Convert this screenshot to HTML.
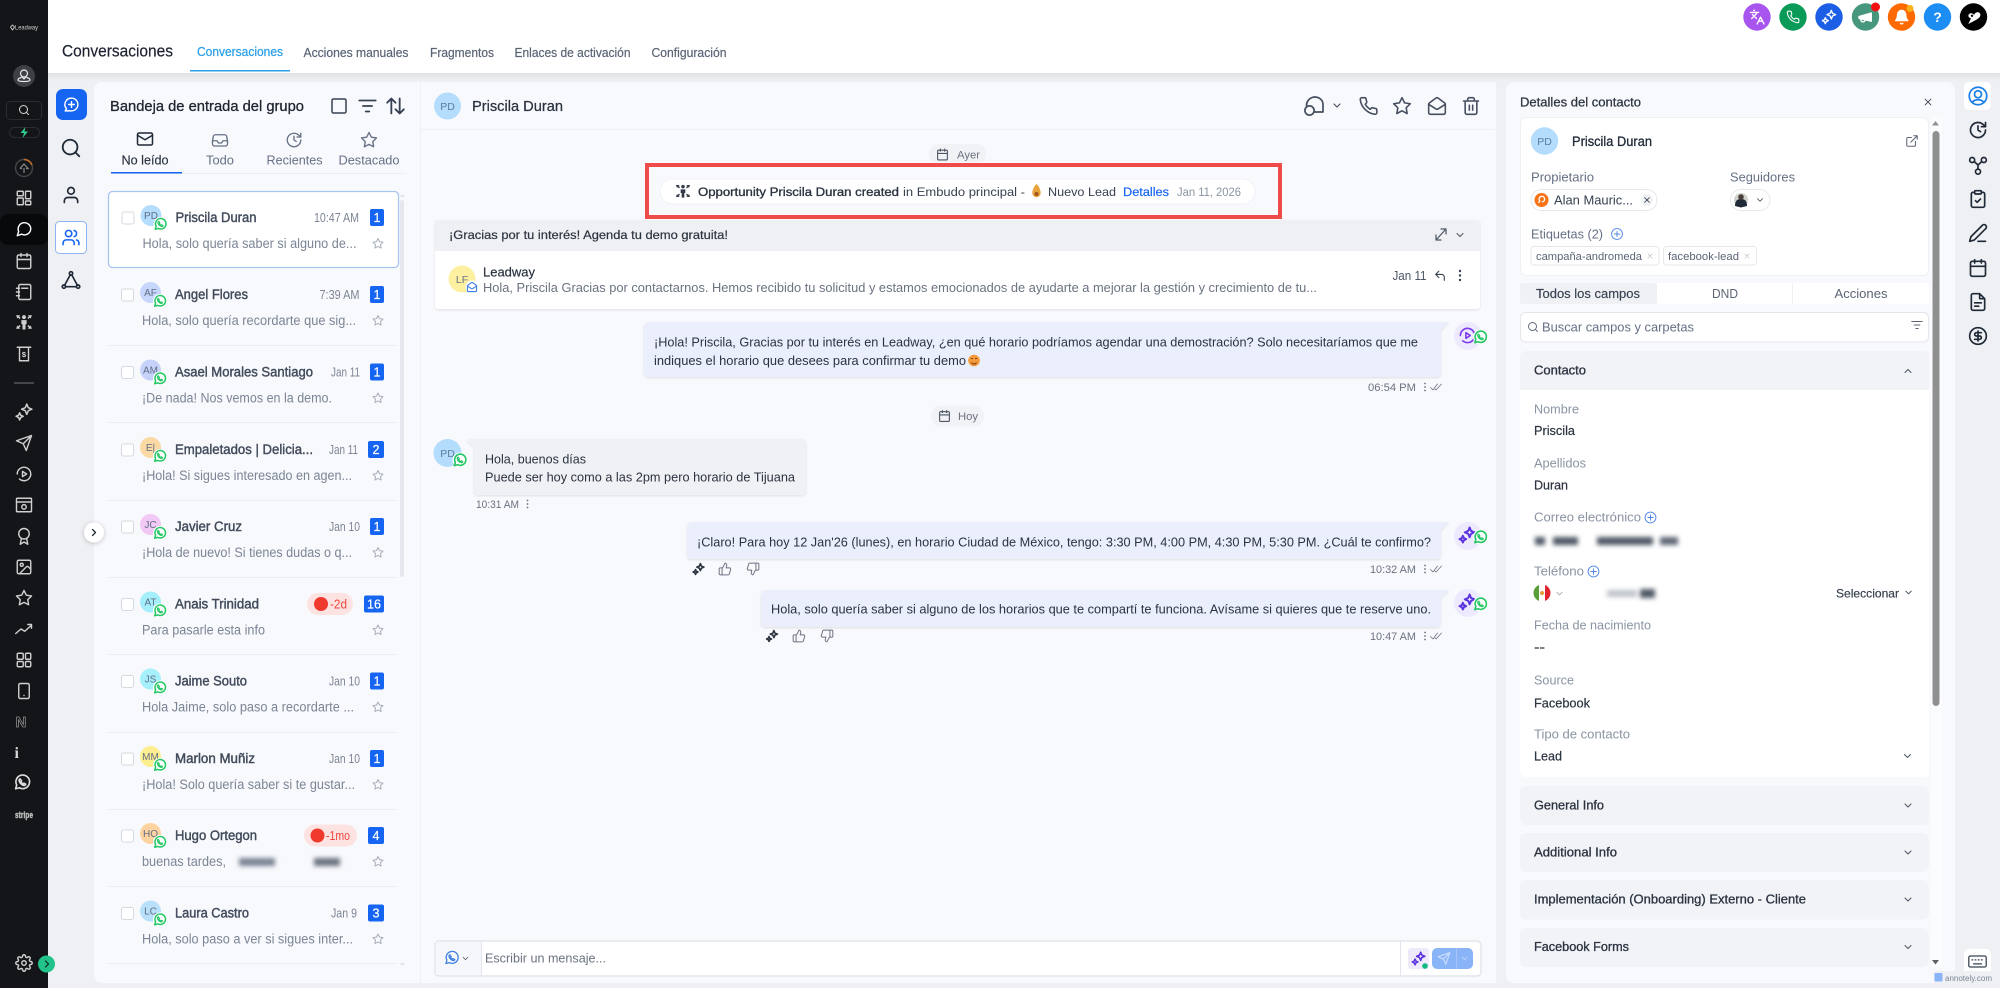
<!DOCTYPE html>
<html lang="es"><head><meta charset="utf-8"><title>Conversaciones</title>
<style>
html,body{margin:0;padding:0;width:2000px;height:988px;overflow:hidden;background:#eef0f3}
svg{display:block}
text{font-family:"Liberation Sans","Noto Sans CJK SC",sans-serif;white-space:pre}
.tb{font-size:12.5px;fill:#5b6575;stroke:#5b6575;stroke-width:.2}
.nm{font-size:13.5px;fill:#414b5b;stroke:#414b5b;stroke-width:.42}
.tm{font-size:12.5px;fill:#7c8594}
.pv{font-size:13.5px;fill:#7b8595}
.av{font-size:10px;fill:#5f6e85;text-anchor:middle}
.bn{font-size:12.5px;fill:#fff;text-anchor:middle;stroke:#fff;stroke-width:.2}
.lb{font-size:13px;fill:#667085;text-anchor:middle}
.ms{font-size:12.8px;fill:#2b3340}
.st{font-size:11px;fill:#6b7280}
.fl{font-size:12.5px;fill:#8a94a3}
.fv{font-size:12.5px;fill:#2b3340;stroke:#2b3340;stroke-width:.2}
.hd{font-size:12.5px;fill:#2b3340;stroke:#2b3340;stroke-width:.3}
</style></head><body>
<svg xmlns="http://www.w3.org/2000/svg" width="2000" height="988" viewBox="0 0 2000 988">
<defs>
<linearGradient id="sh" x1="0" y1="0" x2="0" y2="1"><stop offset="0" stop-color="#e0e2e6"/><stop offset="1" stop-color="#eef0f3"/></linearGradient>
<filter id="b" x="-30%" y="-100%" width="160%" height="300%"><feGaussianBlur stdDeviation="2.4"/></filter>
<filter id="ds" x="-20%" y="-20%" width="140%" height="140%"><feDropShadow dx="0" dy="1" stdDeviation="1" flood-color="#000" flood-opacity=".1"/></filter>
<filter id="ds2" x="-40%" y="-40%" width="180%" height="180%"><feDropShadow dx="0" dy="1" stdDeviation="2.5" flood-color="#000" flood-opacity=".22"/></filter>
<clipPath id="fc"><circle cx="1542" cy="593" r="8.5"/></clipPath>
<symbol id="wa" viewBox="0 0 24 24"><circle cx="12" cy="12" r="12" fill="#fff"/><path d="M3 21l1.500-5.200A9 9 0 1 1 8.200 19.500z" fill="none" stroke="#25c765" stroke-width="2.600" stroke-linejoin="round"/><path d="M9 7.500c-1 .2-1.600 1.200-1.300 2.600.6 2.600 3.200 5.200 6 6 1.400.3 2.500-.4 2.700-1.500l-2.400-1.300-1 1c-1.300-.5-2.500-1.800-3-3l1-1z" fill="none" stroke="#25c765" stroke-width="2" stroke-linejoin="round"/></symbol>
<symbol id="msg" viewBox="0 0 24 24"><path fill="none" d="M21 11.500a8.400 8.400 0 0 1-12.300 7.400L3 21l1.900-5.700A8.400 8.400 0 1 1 21 11.500z"/></symbol>
<symbol id="cal" viewBox="0 0 24 24"><g fill="none"><rect x="3" y="4" width="18" height="18" rx="2"/><path d="M16 2v4M8 2v4M3 10h18"/></g></symbol>
<symbol id="srch" viewBox="0 0 24 24"><g fill="none"><circle cx="11" cy="11" r="8"/><path d="M21 21l-4.300-4.300"/></g></symbol>
<symbol id="user" viewBox="0 0 24 24"><g fill="none"><path d="M20 21v-2a4 4 0 0 0-4-4H8a4 4 0 0 0-4 4v2"/><circle cx="12" cy="7" r="4"/></g></symbol>
<symbol id="users" viewBox="0 0 24 24"><g fill="none"><path d="M16 21v-2a4 4 0 0 0-4-4H6a4 4 0 0 0-4 4v2"/><circle cx="9" cy="7" r="4"/><path d="M22 21v-2a4 4 0 0 0-3-3.870M16 3.130a4 4 0 0 1 0 7.750"/></g></symbol>
<symbol id="star" viewBox="0 0 24 24"><polygon fill="none" points="12 2 15.090 8.260 22 9.270 17 14.140 18.180 21.020 12 17.770 5.820 21.020 7 14.140 2 9.270 8.910 8.260"/></symbol>
<symbol id="mail" viewBox="0 0 24 24"><g fill="none"><rect x="2" y="4" width="20" height="16" rx="2"/><path d="m22 7-10 6L2 7"/></g></symbol>
<symbol id="inbox" viewBox="0 0 24 24"><g fill="none"><path d="M2 13h6l2 3h4l2-3h6"/><path d="M6 5h12a3 3 0 0 1 3 3l1 5v4a3 3 0 0 1-3 3H5a3 3 0 0 1-3-3v-4l1-5a3 3 0 0 1 3-3z"/></g></symbol>
<symbol id="clk" viewBox="0 0 24 24"><g fill="none"><path d="M21 12a9 9 0 1 1-3-6.700L21 8"/><path d="M21 3v5h-5M12 7v5l3 2"/></g></symbol>
<symbol id="ph" viewBox="0 0 24 24"><path fill="none" d="M22 16.920v3a2 2 0 0 1-2.180 2 19.790 19.790 0 0 1-8.630-3.070 19.500 19.500 0 0 1-6-6 19.790 19.790 0 0 1-3.070-8.670A2 2 0 0 1 4.110 2h3a2 2 0 0 1 2 1.720c.13.960.36 1.900.7 2.810a2 2 0 0 1-.45 2.110L8.090 9.910a16 16 0 0 0 6 6l1.270-1.270a2 2 0 0 1 2.110-.45c.91.34 1.850.57 2.810.7A2 2 0 0 1 22 16.920z"/></symbol>
<symbol id="trash" viewBox="0 0 24 24"><path fill="none" d="M3 6h18M19 6v14a2 2 0 0 1-2 2H7a2 2 0 0 1-2-2V6M8 6V4a2 2 0 0 1 2-2h4a2 2 0 0 1 2 2v2M10 11v6M14 11v6"/></symbol>
<symbol id="mopen" viewBox="0 0 24 24"><g fill="none"><path d="M21.200 8.400c.5.38.8.97.8 1.600v10a2 2 0 0 1-2 2H4a2 2 0 0 1-2-2V10a2 2 0 0 1 .8-1.600l8-6a2 2 0 0 1 2.400 0l8 6z"/><path d="m22 10-8.970 5.700a1.940 1.940 0 0 1-2.060 0L2 10"/></g></symbol>
<symbol id="spk" viewBox="0 0 24 24"><g fill="none"><path d="M15.500 2l1.900 4.600L22 8.500l-4.600 1.900-1.900 4.600-1.900-4.600L9 8.500l4.600-1.900z"/><path d="M6.500 13l1.400 3.100L11 17.500l-3.100 1.400L6.500 22l-1.400-3.100L2 17.500l3.100-1.400z"/></g></symbol>
<symbol id="grid" viewBox="0 0 24 24"><g fill="none"><rect x="3" y="3" width="8" height="8" rx="1.500"/><rect x="14" y="3" width="7" height="8" rx="1.500"/><rect x="3" y="14" width="8" height="7" rx="1.500"/><rect x="14" y="14" width="7" height="7" rx="1.500"/></g></symbol>
<symbol id="grid2" viewBox="0 0 24 24"><g fill="none"><rect x="3" y="3" width="8" height="6" rx="1"/><rect x="14" y="3" width="7" height="10" rx="1"/><rect x="14" y="16" width="7" height="5" rx="1"/><rect x="3" y="12" width="8" height="9" rx="1"/></g></symbol>
<symbol id="note" viewBox="0 0 24 24"><g fill="none"><rect x="5" y="2" width="16" height="20" rx="2"/><path d="M2 7h4M2 12h4M2 17h4M9 7h8"/></g></symbol>
<symbol id="net" viewBox="0 0 24 24"><g fill="currentColor" stroke="none"><circle cx="12" cy="5.500" r="2.600"/><path d="M8.500 9.500h7v5.500H14v7h-4v-7H8.500z"/><path d="M1.500 3h5.500L5.500 4.500 7.500 6.500 6 8 4 6 3 7.500zM22.500 3H17l1.500 1.500-2 2L18 8l2-2 1 1.500zM1.500 21H7l-1.500-1.500 2-2L6 16l-2 2-1-1.500zM22.500 21H17l1.500-1.500-2-2L18 16l2 2 1-1.500z"/></g></symbol>
<symbol id="rcpt" viewBox="0 0 24 24"><g fill="none"><path d="M3 3h18M6 3v18h12V3"/><text x="12" y="16" font-size="10" font-weight="700" text-anchor="middle" stroke="none" fill="#ddd">$</text></g></symbol>
<symbol id="send" viewBox="0 0 24 24"><path fill="none" d="M22 2 11 13M22 2l-7 20-4-9-9-4z"/></symbol>
<symbol id="play" viewBox="0 0 24 24"><g fill="none"><path d="M3 12a9 9 0 1 1 3 6.700"/><path d="M10 8.500l5.500 3.500-5.500 3.500z"/></g></symbol>
<symbol id="page" viewBox="0 0 24 24"><g fill="none"><rect x="2" y="3" width="20" height="18" rx="1"/><path d="M2 8h20"/><circle cx="12" cy="14.500" r="3"/></g></symbol>
<symbol id="awd" viewBox="0 0 24 24"><g fill="none"><circle cx="12" cy="9" r="7"/><path d="M15.500 15 17 23l-5-3-5 3 1.500-8"/></g></symbol>
<symbol id="img" viewBox="0 0 24 24"><g fill="none"><rect x="3" y="3" width="18" height="18" rx="2"/><circle cx="9" cy="9" r="2"/><path d="m21 15-3.100-3.100a2 2 0 0 0-2.800 0L6 21"/></g></symbol>
<symbol id="trnd" viewBox="0 0 24 24"><path fill="none" d="M1 18l7-6 5 3 9-8M17 6h5v5"/></symbol>
<symbol id="tab" viewBox="0 0 24 24"><g fill="none"><rect x="5" y="2" width="14" height="20" rx="2"/><path d="M12 18h.01"/></g></symbol>
<symbol id="gear" viewBox="0 0 24 24"><g fill="none"><circle cx="12" cy="12" r="3"/><path d="M19.400 15a1.650 1.650 0 0 0 .33 1.820l.06.06a2 2 0 0 1 0 2.830 2 2 0 0 1-2.830 0l-.06-.06a1.650 1.650 0 0 0-1.820-.33 1.650 1.650 0 0 0-1 1.510V21a2 2 0 0 1-2 2 2 2 0 0 1-2-2v-.09A1.650 1.650 0 0 0 9 19.400a1.650 1.650 0 0 0-1.820.33l-.06.06a2 2 0 0 1-2.830 0 2 2 0 0 1 0-2.830l.06-.06a1.650 1.650 0 0 0 .33-1.820 1.650 1.650 0 0 0-1.510-1H3a2 2 0 0 1-2-2 2 2 0 0 1 2-2h.09A1.650 1.650 0 0 0 4.600 9a1.650 1.650 0 0 0-.33-1.820l-.06-.06a2 2 0 0 1 0-2.830 2 2 0 0 1 2.830 0l.06.06a1.650 1.650 0 0 0 1.820.33H9a1.650 1.650 0 0 0 1-1.510V3a2 2 0 0 1 2-2 2 2 0 0 1 2 2v.09a1.650 1.650 0 0 0 1 1.510 1.650 1.650 0 0 0 1.820-.33l.06-.06a2 2 0 0 1 2.830 0 2 2 0 0 1 0 2.830l-.06.06a1.650 1.650 0 0 0-.33 1.820V9a1.650 1.650 0 0 0 1.510 1H21a2 2 0 0 1 2 2 2 2 0 0 1-2 2h-.09a1.650 1.650 0 0 0-1.510 1z"/></g></symbol>
<symbol id="tri" viewBox="0 0 24 24"><g fill="none"><circle cx="12" cy="4" r="2"/><circle cx="3.500" cy="20" r="2"/><circle cx="20.500" cy="20" r="2"/><path d="M11 6 4.500 18M13 6l6.500 12M5.500 20h13"/></g></symbol>
<symbol id="nod" viewBox="0 0 24 24"><g fill="none"><circle cx="5" cy="6" r="3"/><circle cx="19" cy="6" r="3"/><circle cx="12" cy="20" r="3"/><path d="M7.500 8 12 12l4.500-4M12 12v5"/></g></symbol>
<symbol id="clip" viewBox="0 0 24 24"><g fill="none"><rect x="8" y="2" width="8" height="4" rx="1"/><path d="M16 4h2a2 2 0 0 1 2 2v14a2 2 0 0 1-2 2H6a2 2 0 0 1-2-2V6a2 2 0 0 1 2-2h2M9 14l2 2 4-4"/></g></symbol>
<symbol id="pen" viewBox="0 0 24 24"><path fill="none" d="M17 3a2.850 2.850 0 1 1 4 4L7.500 20.500 2 22l1.500-5.500zM12 22h9"/></symbol>
<symbol id="doc" viewBox="0 0 24 24"><path fill="none" d="M14 2H6a2 2 0 0 0-2 2v16a2 2 0 0 0 2 2h12a2 2 0 0 0 2-2V8zM14 2v6h6M8 13h8M8 17h5"/></symbol>
<symbol id="dol" viewBox="0 0 24 24"><g fill="none"><circle cx="12" cy="12" r="10"/><path d="M16 8h-6a2 2 0 1 0 0 4h4a2 2 0 1 1 0 4H8M12 18V6"/></g></symbol>
<symbol id="pc" viewBox="0 0 24 24"><g fill="none"><circle cx="12" cy="12" r="10"/><circle cx="12" cy="10" r="4"/><path d="M5.500 19.500a7 5 0 0 1 13 0"/></g></symbol>
<symbol id="ext" viewBox="0 0 24 24"><path fill="none" d="M18 13v6a2 2 0 0 1-2 2H5a2 2 0 0 1-2-2V8a2 2 0 0 1 2-2h6M15 3h6v6M10 14 21 3"/></symbol>
<symbol id="flt" viewBox="0 0 24 24"><path fill="none" d="M3 6h18M7 12h10M10 18h4"/></symbol>
<symbol id="srt" viewBox="0 0 24 24"><path fill="none" d="M7 21V3M2 8l5-5 5 5M17 3v18M12 16l5 5 5-5"/></symbol>
<symbol id="chv" viewBox="0 0 24 24"><path fill="none" d="M6 9l6 6 6-6"/></symbol>
<symbol id="cup" viewBox="0 0 24 24"><path fill="none" d="M6 15l6-6 6 6"/></symbol>
<symbol id="chr" viewBox="0 0 24 24"><path fill="none" d="M9 6l6 6-6 6"/></symbol>
<symbol id="x" viewBox="0 0 24 24"><path fill="none" d="M5 5l14 14M19 5L5 19"/></symbol>
<symbol id="tup" viewBox="0 0 24 24"><path fill="none" d="M7 10v12M15 5.880 14 10h5.830a2 2 0 0 1 1.920 2.560l-2.330 8A2 2 0 0 1 17.500 22H4a2 2 0 0 1-2-2v-8a2 2 0 0 1 2-2h2.760a2 2 0 0 0 1.790-1.110L12 2a3.130 3.130 0 0 1 3 3.880Z"/></symbol>
<symbol id="tdn" viewBox="0 0 24 24"><g transform="rotate(180 12 12)"><path fill="none" d="M7 10v12M15 5.880 14 10h5.830a2 2 0 0 1 1.920 2.560l-2.330 8A2 2 0 0 1 17.500 22H4a2 2 0 0 1-2-2v-8a2 2 0 0 1 2-2h2.760a2 2 0 0 0 1.790-1.110L12 2a3.130 3.130 0 0 1 3 3.880Z"/></g></symbol>
<symbol id="chk" viewBox="0 0 24 24"><path fill="none" d="M1 13l5 5L15 6M10 16l2 2L23 6"/></symbol>
<symbol id="plus" viewBox="0 0 24 24"><g fill="none"><circle cx="12" cy="12" r="10"/><path d="M12 7v10M7 12h10"/></g></symbol>
<symbol id="reply" viewBox="0 0 24 24"><path fill="none" d="M9 4 3 10l6 6M3 10h11a5 5 0 0 1 5 5v6"/></symbol>
<symbol id="chat2" viewBox="0 0 24 24"><g fill="none"><path d="M12 3a9 9 0 0 1 9 9c0 5-4 9-9 9H3l2-3a9 9 0 0 1 7-15z"/><path d="M12 8v8M8 12h8"/></g></symbol>
<symbol id="kbd" viewBox="0 0 24 24"><g fill="none"><rect x="1" y="5" width="22" height="14" rx="2"/><path d="M5 10h1M9 10h1M13 10h1M17 10h1M7 15h10"/></g></symbol>
</defs>

<!-- base -->
<rect width="2000" height="988" fill="#eef0f3"/>
<rect x="48" y="0" width="1952" height="73" fill="#fff"/>
<rect x="48" y="73" width="1952" height="8" fill="url(#sh)"/>

<!-- dark sidebar -->
<rect width="48" height="988" fill="#141518"/>
<path d="M10.500 27l2-2 2 2-2 3z" fill="none" stroke="#ddd" stroke-width=".8"/>
<text x="15" y="29.500" font-size="6.500" fill="#cfcfcf" textLength="23" lengthAdjust="spacingAndGlyphs">Leadway</text>
<circle cx="24" cy="76" r="11" fill="#3e3f44"/>
<g fill="none" stroke="#e8e8e8" stroke-width="1.200" stroke-linecap="round" stroke-linejoin="round"><circle cx="24" cy="73.500" r="3.500"/><path d="M21 77.500c-2 .6-3 1.500-3 2.500 0 1 1.500 1.500 6 1.500s6-.5 6-1.500c0-1-1-1.900-3-2.500"/><path d="M22 77l2 2 2-2"/></g>
<rect x="6.500" y="101.500" width="35" height="18" rx="4" fill="#141518" stroke="#2b2c30"/>
<g stroke="#d8d8d8" stroke-width="2" stroke-linecap="round" stroke-linejoin="round"><use href="#srch" x="18" y="104" width="12" height="12"/></g>
<rect x="9.500" y="127.500" width="30" height="10" rx="5" fill="#141518" stroke="#2b2c30"/>
<path d="M25.500 127l-5 6h3.500l-1.500 5 5.500-6.500h-3.500z" fill="#2fd08f"/>
<circle cx="24" cy="168" r="8.500" fill="none" stroke="#44454a" stroke-width="1.500"/>
<path d="M24 159.500a8.500 8.500 0 0 1 8 5.500" fill="none" stroke="#c2702a" stroke-width="1.500"/>
<path d="M24 173v-5M20 168.500l4-4.500 4 4.500h-2M22 168.500h-2" fill="none" stroke="#8a8a8a" stroke-width="1.200"/>
<rect x="0" y="214" width="48" height="31" rx="8" fill="#08090b"/>
<g stroke="#cfcfcf" stroke-width="1.900" stroke-linecap="round" stroke-linejoin="round" color="#cfcfcf">
<use href="#grid2" x="15" y="189" width="18" height="18"/>
<use href="#msg" x="15" y="220" width="18" height="18" stroke="#fff"/>
<use href="#cal" x="15" y="252" width="18" height="18"/>
<use href="#note" x="15" y="283" width="18" height="18"/>
<use href="#net" x="15" y="313" width="18" height="18"/>
<use href="#rcpt" x="15" y="345" width="18" height="18"/>
<use href="#spk" x="14.500" y="402.500" width="19" height="19"/>
<use href="#send" x="15" y="434" width="18" height="18"/>
<use href="#play" x="15" y="465" width="18" height="18"/>
<use href="#page" x="15" y="496" width="18" height="18"/>
<use href="#awd" x="15" y="527" width="18" height="18"/>
<use href="#img" x="15" y="558" width="18" height="18"/>
<use href="#star" x="15" y="589" width="18" height="18"/>
<use href="#trnd" x="15" y="620" width="18" height="18"/>
<use href="#grid" x="15" y="651" width="18" height="18"/>
<use href="#tab" x="15" y="682" width="18" height="18"/>
<use href="#gear" x="15" y="954" width="18" height="18"/>
</g>
<path d="M14 383h20" stroke="#55565a" stroke-width="1.500"/>
<text x="15.500" y="727" font-size="15" font-weight="700" fill="#141518" stroke="#8a8a8a" stroke-width=".8">N</text>
<text x="14.500" y="758" font-size="16" font-weight="700" fill="#d8d8d8" style="font-family:'Liberation Serif',serif">i</text>
<g transform="translate(14 774) scale(.82)"><path d="M2 18l1.300-4.600A8.300 8.300 0 1 1 6.600 16.800zM7.500 6c-1 .2-1.500 1.200-1.200 2.400.6 2.400 3 4.800 5.500 5.500 1.300.3 2.300-.4 2.500-1.400l-2.200-1.200-.9.900c-1.200-.5-2.300-1.600-2.800-2.800l.9-.9z" fill="none" stroke="#dcdcdc" stroke-width="2" stroke-linejoin="round"/></g>
<text x="15" y="818" font-size="9.500" font-weight="700" fill="#bdbdbd" stroke="#bdbdbd" stroke-width=".4" textLength="18" lengthAdjust="spacingAndGlyphs">stripe</text>
<circle cx="46.500" cy="964" r="8.500" fill="#22c38a"/>
<g stroke="#0b3d2a" stroke-width="2.500" stroke-linecap="round" stroke-linejoin="round"><use href="#chr" x="41" y="958" width="12" height="12"/></g>

<!-- top header -->
<text x="62" y="56.500" font-size="16.500" fill="#1c2230" stroke="#1c2230" stroke-width=".2" textLength="111" lengthAdjust="spacingAndGlyphs">Conversaciones</text>
<text x="197" y="56" font-size="12.500" fill="#2a9fe8" stroke="#2a9fe8" stroke-width=".25" textLength="86" lengthAdjust="spacingAndGlyphs">Conversaciones</text>
<rect x="190" y="70" width="100" height="1.500" fill="#2a9fe8"/>
<text class="tb" x="303.500" y="57" textLength="105" lengthAdjust="spacingAndGlyphs">Acciones manuales</text>
<text class="tb" x="430" y="57" textLength="64" lengthAdjust="spacingAndGlyphs">Fragmentos</text>
<text class="tb" x="514.500" y="57" textLength="116" lengthAdjust="spacingAndGlyphs">Enlaces de activación</text>
<text class="tb" x="651.500" y="57" textLength="75" lengthAdjust="spacingAndGlyphs">Configuración</text>

<!-- top right circles -->
<circle cx="1757" cy="17" r="13.700" fill="#a855f0"/>
<circle cx="1793" cy="17" r="13.700" fill="#0a9b58"/>
<circle cx="1829" cy="17" r="13.700" fill="#1c5fe6"/>
<circle cx="1865.500" cy="17" r="13.700" fill="#46977e"/>
<circle cx="1901.500" cy="17" r="13.700" fill="#ff6a00"/>
<circle cx="1937.500" cy="17" r="13.700" fill="#1c8df2"/>
<circle cx="1973.500" cy="17" r="13.700" fill="#000"/>
<g stroke="#fff" stroke-width="2" stroke-linecap="round" stroke-linejoin="round" fill="none">
<g transform="translate(1749 9) scale(.68)"><path d="m5 8 6 6M4 14l6-6 2-3M2 5h12M7 2h1M22 22l-5-10-5 10M14 18h6"/></g>
<use href="#ph" x="1786" y="10" width="14" height="14" stroke-width="1.800"/>
<use href="#spk" x="1821" y="9" width="16" height="16"/>
<g transform="translate(1857 9) scale(.68)" fill="#fff"><path d="m3 11 18-5v12L3 14v-3z"/><path d="M11.600 16.800a3 3 0 1 1-5.800-1.600" fill="none"/></g>
<g transform="translate(1893.500 9) scale(.68)" fill="#fff"><path d="M6 8a6 6 0 0 1 12 0c0 7 3 9 3 9H3s3-2 3-9"/><path d="M10.300 21a1.940 1.940 0 0 0 3.400 0"/></g>
</g>
<path d="M1968.500 23.500l2.500-5c-2-.8-3-2-2.500-3.500.6-1.800 2.600-2.300 4.300-1.300.7.400 1 .8 1.200 1.300 1-2.500 3.300-3.500 5-2.500 2 1.200 2 3.600-.5 5.800-2 1.700-5.500 3.200-10 5.700z" fill="#fff"/><circle cx="1972" cy="15.800" r="1.200" fill="#000"/>
<text x="1937.500" y="22" font-size="14" font-weight="700" fill="#fff" text-anchor="middle">?</text>
<circle cx="1875.500" cy="7" r="4.500" fill="#f30f0f"/>
<circle cx="1910" cy="8.500" r="3.500" fill="#f9b11a"/>

<!-- left rail -->
<rect x="56" y="89" width="31" height="31" rx="7" fill="#1565f2"/>
<g stroke="#fff" stroke-width="2" stroke-linecap="round" stroke-linejoin="round"><use href="#chat2" x="63" y="96" width="17" height="17"/></g>
<g stroke="#1f2937" stroke-width="2" stroke-linecap="round" stroke-linejoin="round">
<use href="#srch" x="60" y="137" width="22" height="22"/>
<use href="#user" x="61" y="185" width="20" height="20"/>
<use href="#tri" x="61" y="270" width="20" height="20"/>
</g>
<rect x="55.500" y="221.500" width="31" height="32" rx="4" fill="#fff" stroke="#8db4f2" stroke-width="1"/>
<g stroke="#1565f2" stroke-width="2" stroke-linecap="round" stroke-linejoin="round"><use href="#users" x="61.500" y="228" width="19" height="19"/></g>

<!-- main panels -->
<path d="M102 82H1497V983H102a8 8 0 0 1-8-8V90a8 8 0 0 1 8-8z" fill="#f8f9fd"/>
<rect x="420" y="82" width="1" height="901" fill="#eef0f4"/>
<rect x="1496" y="82" width="2" height="901" fill="#eef0f3"/>
<rect x="1506" y="82" width="449" height="901" rx="8" fill="#f8f9fd"/>

<!-- list header -->
<text x="110" y="111" font-size="14.800" fill="#1e2430" stroke="#1e2430" stroke-width=".3" textLength="194" lengthAdjust="spacingAndGlyphs">Bandeja de entrada del grupo</text>
<rect x="332" y="99" width="14" height="14" rx="1.500" fill="none" stroke="#374151" stroke-width="1.500"/>
<g stroke="#374151" stroke-width="1.900" stroke-linecap="round" stroke-linejoin="round">
<use href="#flt" x="356.500" y="95" width="22" height="22"/>
<use href="#srt" x="385.500" y="96" width="20" height="20" stroke-width="2.200"/>
</g>
<g stroke="#1f2937" stroke-width="2" stroke-linecap="round" stroke-linejoin="round"><use href="#mail" x="136" y="130" width="18" height="18"/></g>
<g stroke="#667085" stroke-width="1.800" stroke-linecap="round" stroke-linejoin="round">
<use href="#inbox" x="211" y="131" width="18" height="18"/>
<use href="#clk" x="285" y="131" width="18" height="18"/>
<use href="#star" x="360" y="131" width="18" height="18"/>
</g>
<text x="145" y="164.500" font-size="13" fill="#2b3340" stroke="#2b3340" stroke-width=".15" text-anchor="middle" textLength="47" lengthAdjust="spacingAndGlyphs">No leído</text>
<text class="lb" x="220" y="164.500" textLength="28" lengthAdjust="spacingAndGlyphs">Todo</text>
<text class="lb" x="294.500" y="164.500" textLength="56" lengthAdjust="spacingAndGlyphs">Recientes</text>
<text class="lb" x="369" y="164.500" textLength="61" lengthAdjust="spacingAndGlyphs">Destacado</text>
<rect x="111" y="173" width="295" height="1" fill="#eceef2"/>
<rect x="111" y="172" width="71" height="1.500" fill="#1565f2"/>

<!-- list scrollbar -->
<rect x="400" y="200" width="4" height="377" rx="2" fill="#e4e7ee"/>
<path d="M400 197l2.500-3 2.500 3zM400 963l2.500 3 2.500-3z" fill="#dfe2e8"/>

<!-- selected row -->
<rect x="108.500" y="191.500" width="290" height="76" rx="4" fill="#fff" stroke="#a8c4f0" stroke-width="1.300"/>
<g fill="#eceef2"><rect x="108" y="345" width="290" height="1"/><rect x="108" y="422" width="290" height="1"/><rect x="108" y="500" width="290" height="1"/><rect x="108" y="577" width="290" height="1"/><rect x="108" y="654" width="290" height="1"/><rect x="108" y="732" width="290" height="1"/><rect x="108" y="809" width="290" height="1"/><rect x="108" y="886" width="290" height="1"/><rect x="108" y="963" width="290" height="1"/></g>

<!-- rows -->
<g>
<rect x="122" y="212" width="12" height="12" rx="2" fill="#fff" stroke="#d5d9e0"/><circle cx="151" cy="215.500" r="10.500" fill="#b3dcfd"/><text class="av" x="151" y="219">PD</text><use href="#wa" x="153.500" y="217" width="14" height="14"/>
<text class="nm" x="175.500" y="222" textLength="81" lengthAdjust="spacingAndGlyphs">Priscila Duran</text><text class="tm" x="314" y="222" textLength="45" lengthAdjust="spacingAndGlyphs">10:47 AM</text>
<rect x="370" y="209" width="14" height="17" rx="2" fill="#1565f2"/><text class="bn" x="377" y="222">1</text>
<text class="pv" x="142.500" y="248" textLength="214" lengthAdjust="spacingAndGlyphs">Hola, solo quería saber si alguno de...</text><use href="#star" x="372" y="237.500" width="12" height="12" fill="none" stroke="#a8afba" stroke-width="2" stroke-linejoin="round"/>
</g>
<g transform="translate(0 77)">
<rect x="121.500" y="212" width="12" height="12" rx="2" fill="#fff" stroke="#d5d9e0"/><circle cx="150.500" cy="215.500" r="10.500" fill="#c7d7fb"/><text class="av" x="150.500" y="219">AF</text><use href="#wa" x="153" y="217" width="14" height="14"/>
<text class="nm" x="175" y="222" textLength="73" lengthAdjust="spacingAndGlyphs">Angel Flores</text><text class="tm" x="319.500" y="222" textLength="40" lengthAdjust="spacingAndGlyphs">7:39 AM</text>
<rect x="370" y="209" width="14" height="17" rx="2" fill="#1565f2"/><text class="bn" x="377" y="222">1</text>
<text class="pv" x="142" y="248" textLength="214" lengthAdjust="spacingAndGlyphs">Hola, solo quería recordarte que sig...</text><use href="#star" x="372" y="237.500" width="12" height="12" stroke="#a8afba" stroke-width="2" stroke-linejoin="round"/>
</g>
<g transform="translate(0 154.500)">
<rect x="121.500" y="212" width="12" height="12" rx="2" fill="#fff" stroke="#d5d9e0"/><circle cx="150.500" cy="215.500" r="10.500" fill="#c7d2fb"/><text class="av" x="150.500" y="219">AM</text><use href="#wa" x="153" y="217" width="14" height="14"/>
<text class="nm" x="175" y="222" textLength="138" lengthAdjust="spacingAndGlyphs">Asael Morales Santiago</text><text class="tm" x="331" y="222" textLength="29" lengthAdjust="spacingAndGlyphs">Jan 11</text>
<rect x="370" y="209" width="14" height="17" rx="2" fill="#1565f2"/><text class="bn" x="377" y="222">1</text>
<text class="pv" x="142" y="248" textLength="190" lengthAdjust="spacingAndGlyphs">¡De nada! Nos vemos en la demo.</text><use href="#star" x="372" y="237.500" width="12" height="12" stroke="#a8afba" stroke-width="2" stroke-linejoin="round"/>
</g>
<g transform="translate(0 232)">
<rect x="121.500" y="212" width="12" height="12" rx="2" fill="#fff" stroke="#d5d9e0"/><circle cx="150.500" cy="215.500" r="10.500" fill="#fbd9a5"/><text class="av" x="150.500" y="219">E|</text><use href="#wa" x="153" y="217" width="14" height="14"/>
<text class="nm" x="175" y="222" textLength="138" lengthAdjust="spacingAndGlyphs">Empaletados | Delicia...</text><text class="tm" x="329" y="222" textLength="29" lengthAdjust="spacingAndGlyphs">Jan 11</text>
<rect x="368" y="209" width="16" height="17" rx="2" fill="#1565f2"/><text class="bn" x="376" y="222">2</text>
<text class="pv" x="142" y="248" textLength="210" lengthAdjust="spacingAndGlyphs">¡Hola! Si sigues interesado en agen...</text><use href="#star" x="372" y="237.500" width="12" height="12" stroke="#a8afba" stroke-width="2" stroke-linejoin="round"/>
</g>
<g transform="translate(0 309)">
<rect x="121.500" y="212" width="12" height="12" rx="2" fill="#fff" stroke="#d5d9e0"/><circle cx="150.500" cy="215.500" r="10.500" fill="#f2c8f5"/><text class="av" x="150.500" y="219">JC</text><use href="#wa" x="153" y="217" width="14" height="14"/>
<text class="nm" x="175" y="222" textLength="67" lengthAdjust="spacingAndGlyphs">Javier Cruz</text><text class="tm" x="329" y="222" textLength="31" lengthAdjust="spacingAndGlyphs">Jan 10</text>
<rect x="370" y="209" width="14" height="17" rx="2" fill="#1565f2"/><text class="bn" x="377" y="222">1</text>
<text class="pv" x="142" y="248" textLength="210" lengthAdjust="spacingAndGlyphs">¡Hola de nuevo! Si tienes dudas o q...</text><use href="#star" x="372" y="237.500" width="12" height="12" stroke="#a8afba" stroke-width="2" stroke-linejoin="round"/>
</g>
<g transform="translate(0 386.500)">
<rect x="121.500" y="212" width="12" height="12" rx="2" fill="#fff" stroke="#d5d9e0"/><circle cx="150.500" cy="215.500" r="10.500" fill="#a5eefb"/><text class="av" x="150.500" y="219">AT</text><use href="#wa" x="153" y="217" width="14" height="14"/>
<text class="nm" x="175" y="222" textLength="84" lengthAdjust="spacingAndGlyphs">Anais Trinidad</text>
<rect x="307" y="206.500" width="46" height="22" rx="11" fill="#fde2e2"/><circle cx="321" cy="217.500" r="7" fill="#f03a2e"/><text x="330" y="222" font-size="12.500" fill="#f0483e" textLength="17" lengthAdjust="spacingAndGlyphs">-2d</text>
<rect x="364" y="209" width="20" height="17" rx="2" fill="#1565f2"/><text class="bn" x="374" y="222">16</text>
<text class="pv" x="142" y="248" textLength="123" lengthAdjust="spacingAndGlyphs">Para pasarle esta info</text><use href="#star" x="372" y="237.500" width="12" height="12" stroke="#a8afba" stroke-width="2" stroke-linejoin="round"/>
</g>
<g transform="translate(0 463.500)">
<rect x="121.500" y="212" width="12" height="12" rx="2" fill="#fff" stroke="#d5d9e0"/><circle cx="150.500" cy="215.500" r="10.500" fill="#a5f0fb"/><text class="av" x="150.500" y="219">JS</text><use href="#wa" x="153" y="217" width="14" height="14"/>
<text class="nm" x="175" y="222" textLength="72" lengthAdjust="spacingAndGlyphs">Jaime Souto</text><text class="tm" x="329" y="222" textLength="31" lengthAdjust="spacingAndGlyphs">Jan 10</text>
<rect x="370" y="209" width="14" height="17" rx="2" fill="#1565f2"/><text class="bn" x="377" y="222">1</text>
<text class="pv" x="142" y="248" textLength="212" lengthAdjust="spacingAndGlyphs">Hola Jaime, solo paso a recordarte ...</text><use href="#star" x="372" y="237.500" width="12" height="12" stroke="#a8afba" stroke-width="2" stroke-linejoin="round"/>
</g>
<g transform="translate(0 541)">
<rect x="121.500" y="212" width="12" height="12" rx="2" fill="#fff" stroke="#d5d9e0"/><circle cx="150.500" cy="215.500" r="10.500" fill="#fdee90"/><text class="av" x="150.500" y="219">MM</text><use href="#wa" x="153" y="217" width="14" height="14"/>
<text class="nm" x="175" y="222" textLength="80" lengthAdjust="spacingAndGlyphs">Marlon Muñiz</text><text class="tm" x="329" y="222" textLength="31" lengthAdjust="spacingAndGlyphs">Jan 10</text>
<rect x="370" y="209" width="14" height="17" rx="2" fill="#1565f2"/><text class="bn" x="377" y="222">1</text>
<text class="pv" x="142" y="248" textLength="213" lengthAdjust="spacingAndGlyphs">¡Hola! Solo quería saber si te gustar...</text><use href="#star" x="372" y="237.500" width="12" height="12" stroke="#a8afba" stroke-width="2" stroke-linejoin="round"/>
</g>
<g transform="translate(0 618)">
<rect x="121.500" y="212" width="12" height="12" rx="2" fill="#fff" stroke="#d5d9e0"/><circle cx="150.500" cy="215.500" r="10.500" fill="#fdd4a0"/><text class="av" x="150.500" y="219">HO</text><use href="#wa" x="153" y="217" width="14" height="14"/>
<text class="nm" x="175" y="222" textLength="82" lengthAdjust="spacingAndGlyphs">Hugo Ortegon</text>
<rect x="304" y="206.500" width="53" height="22" rx="11" fill="#fde2e2"/><circle cx="317.500" cy="217.500" r="7" fill="#f03a2e"/><text x="326" y="222" font-size="12.500" fill="#f0483e" textLength="24" lengthAdjust="spacingAndGlyphs">-1mo</text>
<rect x="368" y="209" width="16" height="17" rx="2" fill="#1565f2"/><text class="bn" x="376" y="222">4</text>
<text class="pv" x="142" y="248" textLength="84" lengthAdjust="spacingAndGlyphs">buenas tardes,</text>
<g filter="url(#b)"><rect x="239" y="240" width="36" height="8" fill="#7a8494"/><rect x="314" y="240" width="26" height="8" fill="#6b7280"/></g>
<use href="#star" x="372" y="237.500" width="12" height="12" stroke="#a8afba" stroke-width="2" stroke-linejoin="round"/>
</g>
<g transform="translate(0 695.500)">
<rect x="121.500" y="212" width="12" height="12" rx="2" fill="#fff" stroke="#d5d9e0"/><circle cx="150.500" cy="215.500" r="10.500" fill="#b8e0fb"/><text class="av" x="150.500" y="219">LC</text><use href="#wa" x="153" y="217" width="14" height="14"/>
<text class="nm" x="175" y="222" textLength="74" lengthAdjust="spacingAndGlyphs">Laura Castro</text><text class="tm" x="331" y="222" textLength="26" lengthAdjust="spacingAndGlyphs">Jan 9</text>
<rect x="368" y="209" width="16" height="17" rx="2" fill="#1565f2"/><text class="bn" x="376" y="222">3</text>
<text class="pv" x="142" y="248" textLength="211" lengthAdjust="spacingAndGlyphs">Hola, solo paso a ver si sigues inter...</text><use href="#star" x="372" y="237.500" width="12" height="12" stroke="#a8afba" stroke-width="2" stroke-linejoin="round"/>
</g>

<!-- expand button -->
<circle cx="94" cy="532.500" r="10" fill="#fff" filter="url(#ds2)"/>
<g stroke="#1f2937" stroke-width="2.500" stroke-linecap="round" stroke-linejoin="round"><use href="#chr" x="88" y="526.500" width="12" height="12"/></g>

<!-- chat header -->
<circle cx="447.500" cy="106" r="13.500" fill="#b3dcfd"/><text x="447.500" y="110" font-size="10.500" fill="#5d7d9a" text-anchor="middle">PD</text>
<text x="472" y="111" font-size="14.500" fill="#2b3340" stroke="#2b3340" stroke-width=".25" textLength="91" lengthAdjust="spacingAndGlyphs">Priscila Duran</text>
<rect x="421" y="129" width="1074" height="1" fill="#eef0f4"/>
<g fill="none" stroke="#454f5e" stroke-width="1.700" stroke-linecap="round" stroke-linejoin="round"><path d="M1306.500 105.500a8.500 8.500 0 0 1 15-5.500c1 1.200 1.500 3 1.500 5v7h-8.500"/><circle cx="1309.500" cy="110.500" r="4.600"/></g>
<g stroke="#454f5e" stroke-width="1.900" stroke-linecap="round" stroke-linejoin="round">
<use href="#chv" x="1331" y="99.500" width="12" height="12" stroke-width="2.300"/>
<use href="#ph" x="1358.500" y="96" width="20" height="20"/>
<use href="#star" x="1392" y="96" width="20" height="20"/>
<use href="#mopen" x="1427" y="96" width="20" height="20"/>
<use href="#trash" x="1461" y="96" width="20" height="20"/>
</g>

<!-- Ayer -->
<rect x="929" y="144" width="57" height="20" rx="10" fill="#f1f2f5"/>
<g stroke="#4b5563" stroke-width="2" stroke-linecap="round" stroke-linejoin="round"><use href="#cal" x="936" y="148" width="13" height="13"/></g>
<text class="st" x="957" y="158.500" textLength="23" lengthAdjust="spacingAndGlyphs">Ayer</text>

<!-- red box + system pill -->
<rect x="644.500" y="162.500" width="638" height="57" fill="#fff"/>
<rect x="647" y="165" width="633" height="52" fill="#f8f9fd" stroke="#ef4b4b" stroke-width="4"/>
<rect x="660" y="179" width="595" height="25" rx="12.500" fill="#fff" stroke="#f1f2f6"/>
<use href="#net" x="675" y="183" width="16" height="16" color="#333b48"/>
<text x="698" y="196" font-size="12.200" fill="#2b3340" stroke="#2b3340" stroke-width=".35" textLength="201" lengthAdjust="spacingAndGlyphs">Opportunity Priscila Duran created</text>
<text x="903" y="196" font-size="12.200" fill="#374151" textLength="122" lengthAdjust="spacingAndGlyphs">in Embudo principal -</text>
<path d="M1036.500 184c2.600 2 4 6 4.200 9a4.200 4.200 0 0 1-8.400 0c0-3 1.800-7 4.200-9z" fill="#e8a33d"/><circle cx="1036.500" cy="194" r="2" fill="#a1571c"/>
<text x="1048" y="196" font-size="12.200" fill="#374151" textLength="68" lengthAdjust="spacingAndGlyphs">Nuevo Lead</text>
<text x="1123" y="196" font-size="12.200" fill="#1565f2" stroke="#1565f2" stroke-width=".2" textLength="46" lengthAdjust="spacingAndGlyphs">Detalles</text>
<text x="1177" y="196" font-size="11.500" fill="#8a94a3" textLength="64" lengthAdjust="spacingAndGlyphs">Jan 11, 2026</text>

<!-- email card -->
<rect x="435" y="220" width="1045" height="89" rx="3" fill="#fff" filter="url(#ds)"/>
<path d="M435 251v-28a3 3 0 0 1 3-3H1477a3 3 0 0 1 3 3v28z" fill="#eff0f3"/>
<text x="449" y="239" font-size="12.300" fill="#2b3340" stroke="#2b3340" stroke-width=".2" textLength="279" lengthAdjust="spacingAndGlyphs">¡Gracias por tu interés! Agenda tu demo gratuita!</text>
<g stroke="#4b5563" stroke-width="2" stroke-linecap="round" stroke-linejoin="round">
<path d="M1436 240l10-11M1441 229h5v5M1436 235v5h5" fill="none" stroke-width="1.200"/>
<use href="#chv" x="1454" y="229" width="12" height="12"/>
</g>
<circle cx="462" cy="279" r="13.500" fill="#fdf0a0"/><text x="462" y="283" font-size="10.500" fill="#6b7280" text-anchor="middle">LF</text>
<circle cx="472" cy="287" r="6.500" fill="#fff"/><g stroke="#3f7fe0" stroke-width="2.400" stroke-linecap="round" stroke-linejoin="round"><use href="#mopen" x="466.500" y="281.500" width="11" height="11"/></g>
<text x="483" y="276.500" font-size="12.800" fill="#2b3340" stroke="#2b3340" stroke-width=".2" textLength="52" lengthAdjust="spacingAndGlyphs">Leadway</text>
<text x="483" y="292" font-size="12.600" fill="#6b7280" textLength="834" lengthAdjust="spacingAndGlyphs">Hola, Priscila Gracias por contactarnos. Hemos recibido tu solicitud y estamos emocionados de ayudarte a mejorar la gestión y crecimiento de tu...</text>
<text x="1392.500" y="280" font-size="12.500" fill="#4b5563" textLength="34" lengthAdjust="spacingAndGlyphs">Jan 11</text>
<g stroke="#374151" stroke-width="2" stroke-linecap="round" stroke-linejoin="round"><use href="#reply" x="1434" y="269" width="13" height="13"/></g>
<g fill="#374151"><circle cx="1460" cy="271" r="1.200"/><circle cx="1460" cy="275.500" r="1.200"/><circle cx="1460" cy="280" r="1.200"/></g>

<!-- msg 1 -->
<path d="M649 322H1449L1441 330V373a4 4 0 0 1-4 4H648a4 4 0 0 1-4-4V327a5 5 0 0 1 5-5z" fill="#eaeffb" filter="url(#ds)"/>
<text class="ms" x="654" y="346.500" textLength="764" lengthAdjust="spacingAndGlyphs">¡Hola! Priscila, Gracias por tu interés en Leadway, ¿en qué horario podríamos agendar una demostración? Solo necesitaríamos que me</text>
<text class="ms" x="654" y="365" textLength="312" lengthAdjust="spacingAndGlyphs">indiques el horario que desees para confirmar tu demo</text>
<circle cx="974" cy="360.500" r="5.800" fill="#f49a3a"/><path d="M971.500 362.500a2.800 2.800 0 0 0 5 0" fill="none" stroke="#7a3b12" stroke-width="1"/><path d="M971 358.500h1.800M975.200 358.500h1.800" stroke="#7a3b12" stroke-width="1"/>
<circle cx="1468" cy="336" r="14" fill="#ede9fe"/>
<g stroke="#7c3aed" stroke-width="2" stroke-linecap="round" stroke-linejoin="round"><use href="#play" x="1458" y="326" width="19" height="19"/></g>
<use href="#wa" x="1473" y="329.500" width="15" height="15"/>
<text class="st" x="1368" y="391" textLength="48" lengthAdjust="spacingAndGlyphs">06:54 PM</text>
<g fill="#6b7280"><circle cx="1425" cy="383.500" r=".9"/><circle cx="1425" cy="387" r=".9"/><circle cx="1425" cy="390.500" r=".9"/></g>
<g stroke="#6b7280" stroke-width="1.600" stroke-linecap="round" stroke-linejoin="round"><use href="#chk" x="1430" y="381" width="12" height="12"/></g>

<!-- Hoy -->
<rect x="931" y="405.500" width="53" height="21" rx="10.500" fill="#f1f2f5"/>
<g stroke="#4b5563" stroke-width="2" stroke-linecap="round" stroke-linejoin="round"><use href="#cal" x="938" y="409.500" width="13" height="13"/></g>
<text class="st" x="958" y="420" textLength="20" lengthAdjust="spacingAndGlyphs">Hoy</text>

<!-- msg 2 -->
<path d="M466 439H802a4 4 0 0 1 4 4V491a4 4 0 0 1-4 4H478a4 4 0 0 1-4-4V447z" fill="#f0f1f4" filter="url(#ds)"/>
<text class="ms" x="485" y="463.500" textLength="101" lengthAdjust="spacingAndGlyphs">Hola, buenos días</text>
<text class="ms" x="485" y="481.500" textLength="310" lengthAdjust="spacingAndGlyphs">Puede ser hoy como a las 2pm pero horario de Tijuana</text>
<circle cx="447.500" cy="453" r="14" fill="#b3dcfd"/><text x="447.500" y="457" font-size="10.500" fill="#5d7d9a" text-anchor="middle">PD</text>
<use href="#wa" x="452.500" y="452.500" width="15" height="15"/>
<text class="st" x="476" y="508" textLength="43" lengthAdjust="spacingAndGlyphs">10:31 AM</text>
<g fill="#6b7280"><circle cx="527.500" cy="500.500" r=".9"/><circle cx="527.500" cy="504" r=".9"/><circle cx="527.500" cy="507.500" r=".9"/></g>

<!-- msg 3 -->
<path d="M692 522H1449L1441 530V555a4 4 0 0 1-4 4H691a4 4 0 0 1-4-4V527a5 5 0 0 1 5-5z" fill="#eaeffb" filter="url(#ds)"/>
<text class="ms" x="697" y="546.500" textLength="734" lengthAdjust="spacingAndGlyphs">¡Claro! Para hoy 12 Jan'26 (lunes), en horario Ciudad de México, tengo: 3:30 PM, 4:00 PM, 4:30 PM, 5:30 PM. ¿Cuál te confirmo?</text>
<circle cx="1468" cy="536" r="14" fill="#ede9fe"/>
<g stroke="#5b33e0" stroke-width="2.600" stroke-linecap="round" stroke-linejoin="round"><use href="#spk" x="1458" y="526" width="18" height="18"/></g>
<use href="#wa" x="1473" y="529.500" width="15" height="15"/>
<g stroke="#2b3340" stroke-width="3" stroke-linecap="round" stroke-linejoin="round"><use href="#spk" x="692" y="562.500" width="13" height="13"/></g>
<g stroke="#6b7280" stroke-width="1.700" stroke-linecap="round" stroke-linejoin="round"><use href="#tup" x="718" y="562" width="14" height="14"/><use href="#tdn" x="746" y="562" width="14" height="14"/></g>
<text class="st" x="1370" y="573" textLength="46" lengthAdjust="spacingAndGlyphs">10:32 AM</text>
<g fill="#6b7280"><circle cx="1425" cy="565.500" r=".9"/><circle cx="1425" cy="569" r=".9"/><circle cx="1425" cy="572.500" r=".9"/></g>
<g stroke="#6b7280" stroke-width="1.600" stroke-linecap="round" stroke-linejoin="round"><use href="#chk" x="1430" y="563" width="12" height="12"/></g>

<!-- msg 4 -->
<path d="M766 590H1449L1441 598V623a4 4 0 0 1-4 4H765a4 4 0 0 1-4-4V595a5 5 0 0 1 5-5z" fill="#eaeffb" filter="url(#ds)"/>
<text class="ms" x="771" y="613.500" textLength="660" lengthAdjust="spacingAndGlyphs">Hola, solo quería saber si alguno de los horarios que te compartí te funciona. Avísame si quieres que te reserve uno.</text>
<circle cx="1468" cy="603" r="14" fill="#ede9fe"/>
<g stroke="#5b33e0" stroke-width="2.600" stroke-linecap="round" stroke-linejoin="round"><use href="#spk" x="1458" y="593" width="18" height="18"/></g>
<use href="#wa" x="1473" y="596.500" width="15" height="15"/>
<g stroke="#2b3340" stroke-width="3" stroke-linecap="round" stroke-linejoin="round"><use href="#spk" x="765.500" y="629.500" width="13" height="13"/></g>
<g stroke="#6b7280" stroke-width="1.700" stroke-linecap="round" stroke-linejoin="round"><use href="#tup" x="792" y="629" width="14" height="14"/><use href="#tdn" x="820" y="629" width="14" height="14"/></g>
<text class="st" x="1370" y="640" textLength="46" lengthAdjust="spacingAndGlyphs">10:47 AM</text>
<g fill="#6b7280"><circle cx="1425" cy="632.500" r=".9"/><circle cx="1425" cy="636" r=".9"/><circle cx="1425" cy="639.500" r=".9"/></g>
<g stroke="#6b7280" stroke-width="1.600" stroke-linecap="round" stroke-linejoin="round"><use href="#chk" x="1430" y="630" width="12" height="12"/></g>

<!-- composer -->
<rect x="435" y="941" width="1046" height="35" rx="4" fill="#fff" stroke="#e2e5ec" stroke-width="1.500"/>
<path d="M436 942h45v33h-45z" fill="#f6f7fb"/>
<rect x="481" y="941" width="1" height="35" fill="#e2e5ec"/>
<rect x="1400" y="941" width="1" height="35" fill="#e2e5ec"/>
<g transform="translate(444.500 950.500) scale(.72)"><path d="M2 18l1.300-4.600A8.300 8.300 0 1 1 6.600 16.800zM7.500 6c-1 .2-1.500 1.200-1.200 2.400.6 2.400 3 4.800 5.500 5.500 1.300.3 2.300-.4 2.500-1.400l-2.200-1.200-.9.900c-1.200-.5-2.300-1.600-2.800-2.800l.9-.9z" fill="none" stroke="#3f7fe0" stroke-width="1.800" stroke-linejoin="round"/></g>
<g stroke="#4b5563" stroke-width="2.200" stroke-linecap="round" stroke-linejoin="round"><use href="#chv" x="461" y="954" width="9" height="9"/></g>
<text x="485" y="962.500" font-size="12.500" fill="#6b7280" textLength="121" lengthAdjust="spacingAndGlyphs">Escribir un mensaje...</text>
<rect x="1408" y="948" width="21" height="21" rx="3" fill="#eeeafc"/>
<g stroke="#5b33e0" stroke-width="2.600" stroke-linecap="round" stroke-linejoin="round"><use href="#spk" x="1411" y="951" width="15" height="15"/></g>
<circle cx="1425" cy="966" r="2.800" fill="#10b981"/>
<rect x="1432" y="948" width="41" height="21" rx="5" fill="#8ab4f8"/>
<rect x="1456" y="948" width="1" height="21" fill="#a6c4f9"/>
<g stroke="#cfe0fc" stroke-width="1.800" stroke-linecap="round" stroke-linejoin="round"><use href="#send" x="1437" y="951.500" width="14" height="14"/><use href="#chv" x="1460" y="954" width="9" height="9"/></g>

<!-- contact panel -->
<text x="1520" y="106.500" font-size="13" fill="#2b3340" stroke="#2b3340" stroke-width=".25" textLength="121" lengthAdjust="spacingAndGlyphs">Detalles del contacto</text>
<g stroke="#374151" stroke-width="2" stroke-linecap="round"><use href="#x" x="1923" y="97" width="10" height="10"/></g>
<rect x="1520.500" y="117.500" width="408" height="158" rx="6" fill="#fff" stroke="#eef0f4"/>
<circle cx="1544.500" cy="141" r="13.700" fill="#b3dcfd"/><text x="1544.500" y="145" font-size="10.500" fill="#5d7d9a" text-anchor="middle">PD</text>
<text x="1572" y="146" font-size="13.500" fill="#1f2937" stroke="#1f2937" stroke-width=".3" textLength="80" lengthAdjust="spacingAndGlyphs">Priscila Duran</text>
<g stroke="#5b6575" stroke-width="1.800" stroke-linecap="round" stroke-linejoin="round"><use href="#ext" x="1905" y="134" width="14" height="14"/></g>
<text x="1531" y="181.500" font-size="12.800" fill="#667085" textLength="63" lengthAdjust="spacingAndGlyphs">Propietario</text>
<text x="1730" y="181.500" font-size="12.800" fill="#667085" textLength="65" lengthAdjust="spacingAndGlyphs">Seguidores</text>
<rect x="1531" y="189.500" width="126" height="21" rx="10.500" fill="#fff" stroke="#e5e7eb"/>
<circle cx="1541.500" cy="200" r="7" fill="#f97316"/><path d="M1538.500 203l1.300-2a2.800 2.800 0 1 1 2 .9" fill="none" stroke="#fff" stroke-width="1.300"/>
<text x="1554" y="204.500" font-size="12.800" fill="#374151" textLength="79" lengthAdjust="spacingAndGlyphs">Alan Mauric...</text>
<circle cx="1647" cy="200" r="6" fill="#f1f2f4"/><g stroke="#374151" stroke-width="2.500" stroke-linecap="round"><use href="#x" x="1643" y="196" width="8" height="8"/></g>
<rect x="1730.500" y="189.500" width="39.500" height="21" rx="10.500" fill="#fff" stroke="#e5e7eb"/>
<circle cx="1741" cy="200" r="7" fill="#cfd4cc"/><path d="M1735 206c0-5 2-7 6-7s6 2 6 7l-6 1.500z" fill="#1f2937"/><circle cx="1741" cy="197" r="2.800" fill="#4b4038"/>
<g stroke="#374151" stroke-width="2" stroke-linecap="round" stroke-linejoin="round"><use href="#chv" x="1755" y="195" width="10" height="10"/></g>
<text x="1531" y="238.500" font-size="12.800" fill="#667085" textLength="72" lengthAdjust="spacingAndGlyphs">Etiquetas (2)</text>
<g stroke="#4f86e8" stroke-width="1.700" stroke-linecap="round"><use href="#plus" x="1610.500" y="227.500" width="13" height="13"/></g>
<rect x="1531" y="246.500" width="128" height="18.500" rx="3" fill="#fff" stroke="#e5e7eb"/>
<text x="1536" y="260" font-size="11.200" fill="#5b6575" textLength="106" lengthAdjust="spacingAndGlyphs">campaña-andromeda</text>
<g stroke="#a8afba" stroke-width="2" stroke-linecap="round"><use href="#x" x="1646.500" y="252.500" width="7" height="7"/></g>
<rect x="1663.500" y="246.500" width="93" height="18.500" rx="3" fill="#fff" stroke="#e5e7eb"/>
<text x="1668" y="260" font-size="11.200" fill="#5b6575" textLength="71" lengthAdjust="spacingAndGlyphs">facebook-lead</text>
<g stroke="#a8afba" stroke-width="2" stroke-linecap="round"><use href="#x" x="1743.500" y="252.500" width="7" height="7"/></g>

<rect x="1520" y="283" width="409" height="21" rx="2" fill="#fff"/>
<rect x="1520" y="283" width="137" height="21" rx="2" fill="#eff1f4"/>
<rect x="1792" y="283" width="1" height="21" fill="#f0f1f4"/>
<text x="1588" y="298" font-size="12.800" fill="#374151" stroke="#374151" stroke-width=".15" text-anchor="middle" textLength="104" lengthAdjust="spacingAndGlyphs">Todos los campos</text>
<text x="1725" y="298" font-size="12.800" fill="#5b6575" text-anchor="middle" textLength="26" lengthAdjust="spacingAndGlyphs">DND</text>
<text x="1861" y="298" font-size="12.800" fill="#5b6575" text-anchor="middle" textLength="53" lengthAdjust="spacingAndGlyphs">Acciones</text>

<rect x="1520.500" y="312.500" width="408" height="29.500" rx="5" fill="#fff" stroke="#e3e6eb"/>
<g stroke="#5b6575" stroke-width="1.800" stroke-linecap="round" stroke-linejoin="round"><use href="#srch" x="1527" y="321" width="12" height="12"/><use href="#flt" x="1910" y="318" width="14" height="14"/></g>
<text x="1542" y="331.500" font-size="12.800" fill="#667085" textLength="152" lengthAdjust="spacingAndGlyphs">Buscar campos y carpetas</text>

<path d="M1520 390v-33a6 6 0 0 1 6-6H1923a6 6 0 0 1 6 6v33z" fill="#f1f3f7"/>
<path d="M1520 390H1929V771a6 6 0 0 1-6 6H1526a6 6 0 0 1-6-6z" fill="#fff"/>
<text class="hd" x="1534" y="374.500" textLength="52" lengthAdjust="spacingAndGlyphs">Contacto</text>
<g stroke="#4b5563" stroke-width="2" stroke-linecap="round" stroke-linejoin="round"><use href="#cup" x="1902" y="365" width="12" height="12"/></g>

<text class="fl" x="1534" y="413.500" textLength="45" lengthAdjust="spacingAndGlyphs">Nombre</text>
<text class="fv" x="1534" y="435" textLength="41" lengthAdjust="spacingAndGlyphs">Priscila</text>
<text class="fl" x="1534" y="467.500" textLength="52" lengthAdjust="spacingAndGlyphs">Apellidos</text>
<text class="fv" x="1534" y="489.500" textLength="34" lengthAdjust="spacingAndGlyphs">Duran</text>
<text class="fl" x="1534" y="521.500" textLength="107" lengthAdjust="spacingAndGlyphs">Correo electrónico</text>
<g stroke="#4f86e8" stroke-width="1.700" stroke-linecap="round"><use href="#plus" x="1644" y="511" width="13" height="13"/></g>
<g filter="url(#b)" fill="#4f5866"><rect x="1535" y="537" width="10" height="8"/><rect x="1553" y="537" width="25" height="8"/><rect x="1597" y="537" width="14" height="8"/><rect x="1611" y="537" width="42" height="8"/><rect x="1660" y="537" width="18" height="8" fill="#5f6875"/></g>
<text class="fl" x="1534" y="575.500" textLength="50" lengthAdjust="spacingAndGlyphs">Teléfono</text>
<g stroke="#4f86e8" stroke-width="1.700" stroke-linecap="round"><use href="#plus" x="1587" y="565" width="13" height="13"/></g>
<g clip-path="url(#fc)"><rect x="1533" y="584" width="6" height="18" fill="#5a9e3a"/><rect x="1539" y="584" width="6" height="18" fill="#fff"/><rect x="1545" y="584" width="6" height="18" fill="#e0232e"/><circle cx="1542" cy="593" r="2" fill="#e39b36"/></g>
<g stroke="#9aa2af" stroke-width="1.800" stroke-linecap="round" stroke-linejoin="round"><use href="#chv" x="1554" y="588" width="11" height="11"/></g>
<g filter="url(#b)"><rect x="1607" y="590" width="30" height="7" fill="#c0c4cb"/><rect x="1640" y="589" width="15" height="9" fill="#4f5866"/></g>
<text x="1836" y="597.500" font-size="12" fill="#3b4452" stroke="#3b4452" stroke-width=".2" textLength="63" lengthAdjust="spacingAndGlyphs">Seleccionar</text>
<g stroke="#4b5563" stroke-width="2" stroke-linecap="round" stroke-linejoin="round"><use href="#chv" x="1903" y="587" width="11" height="11"/></g>
<text class="fl" x="1534" y="629.500" textLength="117" lengthAdjust="spacingAndGlyphs">Fecha de nacimiento</text>
<text class="fv" x="1534" y="651.500" textLength="11" lengthAdjust="spacingAndGlyphs">--</text>
<text class="fl" x="1534" y="684.500" textLength="40" lengthAdjust="spacingAndGlyphs">Source</text>
<text class="fv" x="1534" y="707.500" textLength="56" lengthAdjust="spacingAndGlyphs">Facebook</text>
<text class="fl" x="1534" y="738.500" textLength="96" lengthAdjust="spacingAndGlyphs">Tipo de contacto</text>
<text class="fv" x="1534" y="760.500" textLength="28" lengthAdjust="spacingAndGlyphs">Lead</text>
<g stroke="#4b5563" stroke-width="2" stroke-linecap="round" stroke-linejoin="round"><use href="#chv" x="1901.500" y="750" width="12" height="12"/></g>

<rect x="1520" y="786" width="409" height="39" rx="6" fill="#f1f3f7"/>
<rect x="1520" y="833" width="409" height="39" rx="6" fill="#f1f3f7"/>
<rect x="1520" y="880" width="409" height="39.500" rx="6" fill="#f1f3f7"/>
<rect x="1520" y="928" width="409" height="39" rx="6" fill="#f1f3f7"/>
<text class="hd" x="1534" y="809.500" textLength="70" lengthAdjust="spacingAndGlyphs">General Info</text>
<text class="hd" x="1534" y="856.500" textLength="83" lengthAdjust="spacingAndGlyphs">Additional Info</text>
<text class="hd" x="1534" y="903.500" textLength="272" lengthAdjust="spacingAndGlyphs">Implementación (Onboarding) Externo - Cliente</text>
<text class="hd" x="1534" y="951" textLength="95" lengthAdjust="spacingAndGlyphs">Facebook Forms</text>
<g stroke="#4b5563" stroke-width="2" stroke-linecap="round" stroke-linejoin="round"><use href="#chv" x="1902" y="799.500" width="12" height="12"/><use href="#chv" x="1902" y="846.500" width="12" height="12"/><use href="#chv" x="1902" y="893.500" width="12" height="12"/><use href="#chv" x="1902" y="941" width="12" height="12"/></g>

<!-- right scrollbar -->
<rect x="1931" y="117" width="11" height="850" fill="#fbfcfe"/>
<rect x="1932.500" y="131" width="7" height="575" rx="3.500" fill="#8f8f8f"/>
<path d="M1932 125.500l3.500-4.500 3.500 4.500z" fill="#8f8f8f"/>
<path d="M1932 960l3.500 4.500 3.500-4.500z" fill="#5f5f5f"/>

<!-- right rail -->
<rect x="1964" y="82" width="27" height="28" rx="5" fill="#fff"/>
<g stroke="#1c7fe6" stroke-width="2" stroke-linecap="round" stroke-linejoin="round"><use href="#pc" x="1967.500" y="85.500" width="21" height="21"/></g>
<g stroke="#1f2937" stroke-width="2" stroke-linecap="round" stroke-linejoin="round">
<use href="#clk" x="1968" y="120" width="20" height="20"/>
<use href="#nod" x="1968" y="155" width="20" height="20"/>
<use href="#clip" x="1968" y="189" width="20" height="20"/>
<use href="#pen" x="1968" y="223" width="20" height="20"/>
<use href="#cal" x="1968" y="258" width="20" height="20"/>
<use href="#doc" x="1968" y="292" width="20" height="20"/>
<use href="#dol" x="1968" y="326" width="20" height="20"/>
</g>
<rect x="1964" y="949" width="27" height="28" rx="5" fill="#fff"/>
<g stroke="#374151" stroke-width="1.600" stroke-linecap="round"><use href="#kbd" x="1968" y="952" width="19" height="19"/></g>

<!-- watermark -->
<rect x="1934" y="971" width="60" height="13" fill="#eef0f3"/>
<rect x="1934.500" y="973" width="8" height="8.500" rx="1" fill="#8ab4f8"/>
<text x="1945" y="981" font-size="8" fill="#7b8595" textLength="47" lengthAdjust="spacingAndGlyphs">annotely.com</text>
</svg>
</body></html>
